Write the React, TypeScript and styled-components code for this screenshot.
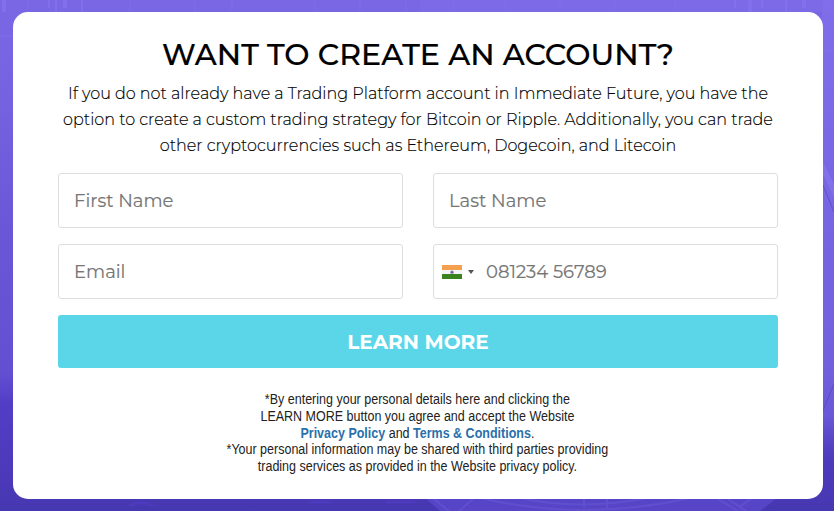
import React from 'react';
import styled, { createGlobalStyle } from 'styled-components';

const GlobalStyle = createGlobalStyle`
  * { box-sizing: border-box; }
  body { margin: 0; overflow: hidden; font-family: Montserrat, Inter, sans-serif; }
`;

const Page = styled.main`
  position: relative;
  width: 834px;
  height: 511px;
  padding: 12px 11px 12px 13px;
  background: linear-gradient(180deg, #7a67e4 0%, #7463de 20%, #6957d7 45%, #6250d2 73%, #503fc5 79%, #4b39b9 94%, #4638b0 100%);
`;

const Backdrop = styled.svg`
  position: absolute;
  inset: 0;
`;

const Card = styled.section`
  position: relative;
  height: 487px;
  padding: 24px 45px 0;
  border-radius: 15px;
  background: #fff;
  text-align: center;
`;

const Title = styled.h1`
  margin: 0;
  color: #000;
  font-size: 30px;
  font-weight: 500;
  line-height: 37px;
  letter-spacing: 0.06px;
  white-space: nowrap;
  -webkit-text-stroke: 0.2px #000;
`;

const Intro = styled.p`
  margin: 8px 0 14px;
  color: #000;
  font-size: 16px;
  font-weight: 300;
  line-height: 26px;
  white-space: nowrap;
  -webkit-text-stroke: 0.15px #000;
`;

const Form = styled.form`
  display: grid;
  grid-template-columns: 1fr 1fr;
  gap: 16px 30px;
`;

const Field = styled.label`
  display: flex;
  align-items: center;
  height: 55px;
  border: 1px solid #ddd;
  border-radius: 3px;
  background: #fff;
`;

const Input = styled.input<{ $inset?: number }>`
  flex: 1;
  min-width: 0;
  height: 100%;
  padding: 0 15px 0 ${({ $inset = 15 }) => $inset}px;
  border: 0;
  outline: 0;
  background: transparent;
  font: 400 18px Montserrat, Inter, sans-serif;
  &::placeholder { color: #757575; opacity: 1; -webkit-text-stroke: 0.15px #757575; }
`;

const Country = styled.span`
  display: flex;
  align-items: center;
  gap: 6px;
  padding-left: 8px;
`;

const Caret = styled.span`
  border: 3px solid transparent;
  border-top: 4px solid #555;
  border-bottom: 0;
`;

const Submit = styled.button`
  grid-column: 1 / -1;
  height: 53px;
  padding: 0;
  border: 0;
  border-radius: 3px;
  background: #5ad6e8;
  color: #fff;
  font: 700 20px Montserrat, Inter, sans-serif;
`;

const Disclaimer = styled.p`
  margin: 23px 0 0;
  color: #222;
  font: 14px/16.8px "Liberation Sans", Arial, sans-serif;
  white-space: nowrap;
  transform: translateX(-0.6px) scaleX(0.893);
`;

const Link = styled.a`
  color: #2a70ab;
  font-weight: 700;
`;

const candles = [4, 49, 56, 65, 82, 735, 750, 762, 786, 804];
const gridLines = [28, 130, 195, 232, 315, 360, 406, 454, 505, 560, 615, 675];

function IndiaFlag() {
  return (
    <svg width="20" height="14" viewBox="0 0 20 14">
      <path fill="#f5a04f" d="M0 0h20v5H0z" />
      <path fill="#f4f4f8" d="M0 5h20v4H0z" />
      <path fill="#3a8220" d="M0 9h20v5H0z" />
      <circle cx="10" cy="7.2" r="1.8" fill="#8585ae" />
      <circle cx="10" cy="7.2" r=".8" fill="#55558c" />
    </svg>
  );
}

export default function App() {
  return (
    <>
      <GlobalStyle />
      <Page>
        <Backdrop width="834" height="511" viewBox="0 0 834 511" fill="none">
          <defs>
            <linearGradient id="side" x1="0" y1="0" x2="0" y2="1">
              <stop stopColor="#8270ee" stopOpacity=".65" />
              <stop offset=".9" stopColor="#7967e4" stopOpacity=".65" />
              <stop offset="1" stopColor="#6553d4" stopOpacity="0" />
            </linearGradient>
          </defs>
          <path fill="url(#side)" d="M822 0h12v462h-12z" />
          <path fill="#806fe9" opacity=".45" d="M420 0h414v12H420z" />
          {gridLines.map((x) => (
            <path key={x} d={`M${x} 0v12`} stroke="#8b7bed" strokeOpacity=".35" />
          ))}
          {candles.map((x, i) => (
            <path key={x} d={`M${x} 0v${i % 2 ? 8 : 12}`} stroke="#8c7bf4" strokeOpacity=".45" strokeWidth={i % 3 ? 2 : 4} />
          ))}
          <path d="M0 36h13M822 51h12" stroke="#8875ed" strokeOpacity=".6" />
          <path d="M823 185l11 27M822 413l12-29" stroke="#5547b5" strokeOpacity=".65" />
          <path d="M823 162l11 22v14l-11-24z" fill="#8c7bed" opacity=".5" />
          <path d="M425 498h352l-17 13H440z" fill="#604fd4" opacity=".6" />
          <path d="M434 499l15 12M473 499l-14 12M481 498q100 24 210 0M520 498q60 13 127 0M718 499l20 12M728 499l18 12M751 499l-12 8M584 499v9M607 499v9" stroke="#7060d9" strokeOpacity=".4" strokeWidth="2" />
          <path d="M129 506q12-7 24 0M309 502h22M386 502h29" stroke="#523cc3" strokeWidth="3" strokeOpacity=".6" />
        </Backdrop>
        <Card>
          <Title>WANT TO CREATE AN ACCOUNT?</Title>
          <Intro>
            If you do not already have a Trading Platform account in Immediate Future, you have the<br />
            option to create a custom trading strategy for Bitcoin or Ripple. Additionally, you can trade<br />
            other cryptocurrencies such as Ethereum, Dogecoin, and Litecoin
          </Intro>
          <Form>
            <Field><Input placeholder="First Name" /></Field>
            <Field><Input placeholder="Last Name" /></Field>
            <Field><Input placeholder="Email" /></Field>
            <Field>
              <Country><IndiaFlag /><Caret /></Country>
              <Input $inset={12} type="tel" placeholder="081234 56789" />
            </Field>
            <Submit type="button">LEARN MORE</Submit>
          </Form>
          <Disclaimer>
            *By entering your personal details here and clicking the<br />
            LEARN MORE button you agree and accept the Website<br />
            <Link>Privacy Policy</Link> and <Link>Terms &amp; Conditions</Link>.<br />
            *Your personal information may be shared with third parties providing<br />
            trading services as provided in the Website privacy policy.
          </Disclaimer>
        </Card>
      </Page>
    </>
  );
}
